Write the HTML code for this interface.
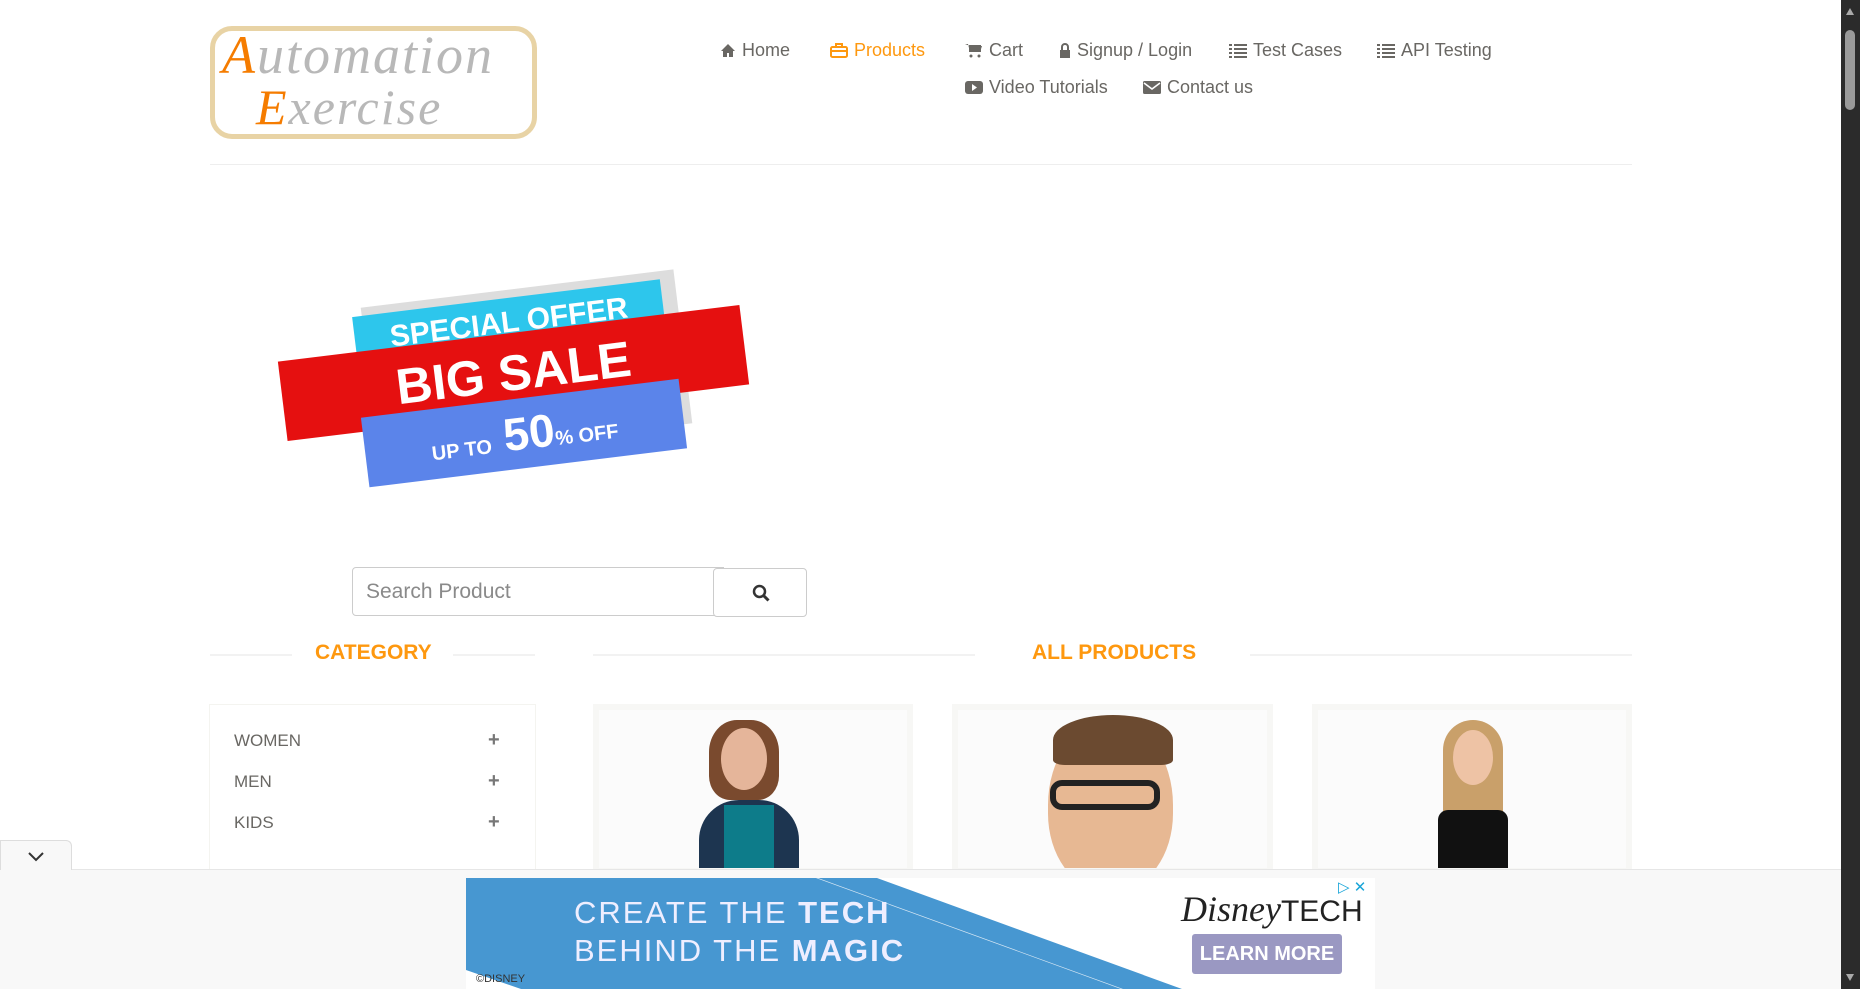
<!DOCTYPE html>
<html><head><meta charset="utf-8"><style>
*{margin:0;padding:0;box-sizing:border-box}
html,body{width:1860px;height:989px;overflow:hidden}
body{background:#fff;font-family:"Liberation Sans",sans-serif;position:relative;color:#696763}
.a{position:absolute}
.nav{font-size:18px;color:#696763;white-space:nowrap}
.nav svg{vertical-align:-2px;margin-right:6px}
.title{color:#FE980F;font-weight:bold;font-size:21px}
.line{height:2px;background:#f2f2f2}
.card{border:6px solid #f7f7f5;background:#fbfbfb;overflow:hidden}
.cat{font-size:17px;color:#696763}
.plus{font-size:20px;font-weight:bold;color:#777;line-height:20px}
</style></head><body>
<div class="a" style="left:210px;top:26px;width:327px;height:113px;border:5px solid #e8d3a5;border-radius:22px;background:#fff"></div>
<div class="a" style="left:222px;top:28px;font-family:'Liberation Serif',serif;font-style:italic;font-size:54px;color:#b8b8b8;letter-spacing:2px;line-height:54px"><span style="color:#f57c00">A</span>utomation</div>
<div class="a" style="left:256px;top:82px;font-family:'Liberation Serif',serif;font-style:italic;font-size:50px;color:#b8b8b8;letter-spacing:2px;line-height:50px"><span style="color:#f57c00">E</span>xercise</div>
<div class="a nav" style="left:720px;top:40px"><svg width="16" height="15" viewBox="0 0 16 15"><path d="M8 1L1 8h2v6h4v-4h2v4h4V8h2z" fill="#696763"/></svg>Home</div>
<div class="a nav" style="left:830px;top:40px;color:#FE980F"><svg width="18" height="15" viewBox="0 0 18 15"><rect x="1" y="4" width="16" height="10" rx="1.5" fill="none" stroke="#FE980F" stroke-width="2"/><path d="M6 4V1h6v3M1 8h16" stroke="#FE980F" stroke-width="2" fill="none"/></svg>Products</div>
<div class="a nav" style="left:965px;top:40px"><svg width="18" height="15" viewBox="0 0 18 15"><path d="M0 1h3l2 8h10l2-6H5" fill="#696763"/><rect x="4" y="2" width="12" height="7" fill="#696763"/><circle cx="6" cy="13" r="1.5" fill="#696763"/><circle cx="14" cy="13" r="1.5" fill="#696763"/></svg>Cart</div>
<div class="a nav" style="left:1059px;top:40px"><svg width="12" height="15" viewBox="0 0 12 15"><path d="M3 7V4a3 3 0 016 0v3" stroke="#696763" stroke-width="2" fill="none"/><rect x="1" y="7" width="10" height="8" fill="#696763"/></svg>Signup / Login</div>
<div class="a nav" style="left:1229px;top:40px"><svg width="18" height="15" viewBox="0 0 18 15"><path d="M0 1h3v2H0zM5 1h13v2H5zM0 5h3v2H0zM5 5h13v2H5zM0 9h3v2H0zM5 9h13v2H5zM0 13h3v2H0zM5 13h13v2H5z" fill="#696763"/></svg>Test Cases</div>
<div class="a nav" style="left:1377px;top:40px"><svg width="18" height="15" viewBox="0 0 18 15"><path d="M0 1h3v2H0zM5 1h13v2H5zM0 5h3v2H0zM5 5h13v2H5zM0 9h3v2H0zM5 9h13v2H5zM0 13h3v2H0zM5 13h13v2H5z" fill="#696763"/></svg>API Testing</div>
<div class="a nav" style="left:965px;top:77px"><svg width="18" height="15" viewBox="0 0 18 15"><rect x="0" y="1" width="18" height="13" rx="3" fill="#696763"/><path d="M7 4l5 3.5L7 11z" fill="#fff"/></svg>Video Tutorials</div>
<div class="a nav" style="left:1143px;top:77px"><svg width="18" height="15" viewBox="0 0 18 15"><rect x="0" y="1" width="18" height="13" rx="1.5" fill="#696763"/><path d="M1 3l8 6 8-6" stroke="#fff" stroke-width="1.6" fill="none"/></svg>Contact us</div>
<div class="a line" style="left:210px;top:164px;width:1422px;height:1px;background:#eee"></div>
<div class="a" style="left:279px;top:268px;width:480px;height:215px">
<div class="a" style="left:90px;top:20px;width:315px;height:155px;background:#ddd;transform:rotate(-7deg)"></div>
<div class="a" style="left:75px;top:30px;width:310px;height:50px;background:#2dc6ec;transform:rotate(-7deg);color:#fff;font-weight:bold;font-size:30px;text-align:center;line-height:50px">SPECIAL OFFER</div>
<div class="a" style="left:2px;top:65px;width:465px;height:80px;background:#e51010;transform:rotate(-7deg);color:#fff;font-weight:bold;font-size:50px;text-align:center;line-height:80px">BIG SALE</div>
<div class="a" style="left:85px;top:130px;width:320px;height:70px;background:#5b84ea;transform:rotate(-7deg);color:#fff;font-weight:bold;font-size:46px;text-align:center;line-height:70px"><span style="font-size:20px">UP TO</span> 50<span style="font-size:20px">% OFF</span></div>
</div>
<div class="a" style="left:352px;top:567px;width:372px;height:49px;border:1px solid #ccc;border-radius:4px 0 0 4px;font-size:21px;color:#8a8a8a;padding:12px 13px">Search Product</div>
<div class="a" style="left:713px;top:568px;width:94px;height:49px;border:1px solid #ccc;border-radius:4px;background:#fff"><svg class="a" style="left:38px;top:15px" width="18" height="18" viewBox="0 0 18 18"><circle cx="7.5" cy="7.5" r="5.5" stroke="#333" stroke-width="2.5" fill="none"/><path d="M11.5 11.5l5 5" stroke="#333" stroke-width="3"/></svg></div>
<div class="a line" style="left:210px;top:654px;width:82px"></div>
<div class="a title" style="left:315px;top:641px">CATEGORY</div>
<div class="a line" style="left:453px;top:654px;width:82px"></div>
<div class="a line" style="left:593px;top:654px;width:382px"></div>
<div class="a title" style="left:1032px;top:641px">ALL PRODUCTS</div>
<div class="a line" style="left:1250px;top:654px;width:382px"></div>
<div class="a" style="left:209px;top:704px;width:327px;height:170px;border:1px solid #f4f4f0"></div>
<div class="a cat" style="left:234px;top:731px">WOMEN</div>
<div class="a cat" style="left:234px;top:772px">MEN</div>
<div class="a cat" style="left:234px;top:813px">KIDS</div>
<div class="a plus" style="left:488px;top:730px">+</div>
<div class="a plus" style="left:488px;top:771px">+</div>
<div class="a plus" style="left:488px;top:812px">+</div>
<div class="a card" style="left:593px;top:704px;width:320px;height:170px">
<div class="a" style="left:110px;top:10px;width:70px;height:80px;border-radius:40% 40% 30% 30%;background:#7a4a2e"></div>
<div class="a" style="left:122px;top:18px;width:46px;height:62px;border-radius:50%;background:#e5b59a"></div>
<div class="a" style="left:100px;top:90px;width:100px;height:90px;border-radius:40px 40px 0 0;background:#1d3550"></div>
<div class="a" style="left:125px;top:95px;width:50px;height:85px;background:#0d7c8a"></div></div>
<div class="a card" style="left:952px;top:704px;width:321px;height:170px">
<div class="a" style="left:90px;top:10px;width:125px;height:170px;border-radius:50% 50% 45% 45%;background:#e7b893"></div>
<div class="a" style="left:95px;top:5px;width:120px;height:50px;border-radius:50% 50% 10% 10%;background:#6b4a30"></div>
<div class="a" style="left:92px;top:70px;width:110px;height:30px;border:6px solid #222;border-radius:12px"></div></div>
<div class="a card" style="left:1312px;top:704px;width:320px;height:170px">
<div class="a" style="left:125px;top:10px;width:60px;height:110px;border-radius:30px 30px 10px 10px;background:#c9a06a"></div>
<div class="a" style="left:135px;top:20px;width:40px;height:55px;border-radius:50%;background:#eec3a5"></div>
<div class="a" style="left:120px;top:100px;width:70px;height:80px;border-radius:10px 10px 0 0;background:#111"></div></div>
<div class="a" style="left:0;top:869px;width:1841px;height:120px;background:#f8f8f8;border-top:1px solid #e6e6e6"></div>
<div class="a" style="left:0;top:840px;width:72px;height:30px;background:#f8f8f8;border:1px solid #ddd;border-bottom:none;border-radius:0 6px 0 0"><svg class="a" style="left:26px;top:10px" width="18" height="12" viewBox="0 0 18 12"><path d="M2 2l7 7 7-7" stroke="#333" stroke-width="2" fill="none"/></svg></div>
<div class="a" style="left:466px;top:878px;width:909px;height:111px;background:#4797d1;overflow:hidden">
<div class="a" style="left:411px;top:0;width:900px;height:111px;background:#fff;transform:skewX(70deg);transform-origin:0 0"></div>
<div class="a" style="left:350px;top:0;width:2px;height:120px;background:#d8e8f4;transform:skewX(70deg);transform-origin:0 0"></div>
<svg class="a" style="left:0;top:0" width="909" height="111"><path d="M0 92L55 111H0z" fill="#fff"/></svg>
<div class="a" style="left:108px;top:16px;color:#eef;font-size:31px;letter-spacing:2px;line-height:38px">CREATE THE <b>TECH</b><br>BEHIND THE <b>MAGIC</b></div>
<div class="a" style="left:10px;top:95px;font-size:11px;color:#333">©DISNEY</div>
<div class="a" style="left:715px;top:10px;font-family:'Liberation Serif',serif;font-style:italic;font-size:36px;color:#222">Disney<span style="font-style:normal;font-family:'Liberation Sans';font-size:30px">TECH</span></div>
<div class="a" style="left:726px;top:56px;width:150px;height:40px;background:#9a98c2;color:#fff;font-weight:bold;font-size:20px;text-align:center;line-height:40px;border-radius:3px">LEARN MORE</div>
<div class="a" style="left:872px;top:0;color:#19a5d8;font-size:15px">▷ ✕</div>
</div>
<div class="a" style="left:1841px;top:0;width:19px;height:989px;background:#2b2b2b"></div>
<div class="a" style="left:1845px;top:30px;width:10px;height:80px;background:#9a9a9a;border-radius:5px"></div>
<div class="a" style="left:1846px;top:8px;width:0;height:0;border-left:4px solid transparent;border-right:4px solid transparent;border-bottom:7px solid #aaa"></div>
<div class="a" style="left:1846px;top:974px;width:0;height:0;border-left:4px solid transparent;border-right:4px solid transparent;border-top:7px solid #aaa"></div>
</body></html>
